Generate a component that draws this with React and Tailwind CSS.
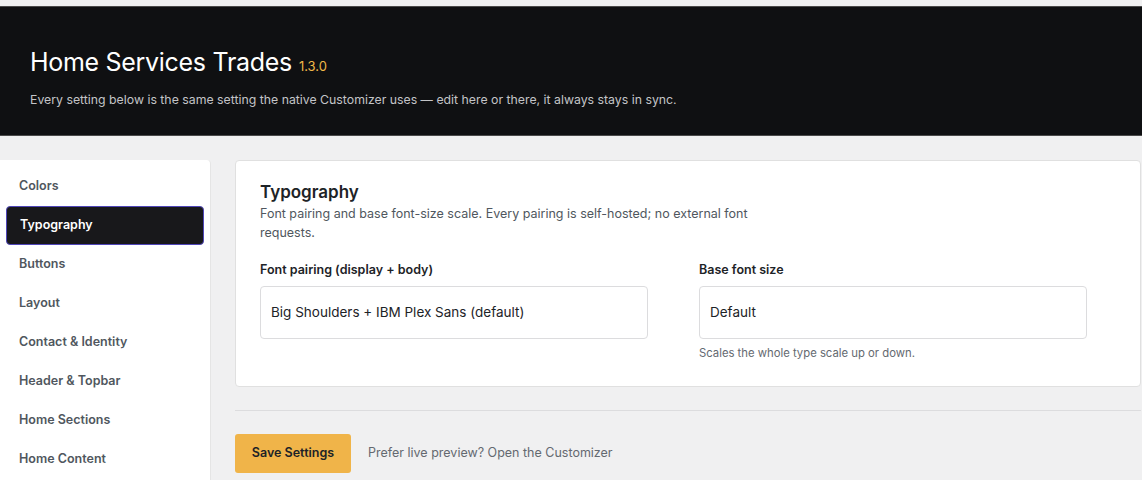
export default function App() {
  const items = [
    "Colors",
    "Typography",
    "Buttons",
    "Layout",
    "Contact & Identity",
    "Header & Topbar",
    "Home Sections",
    "Home Content",
  ];
  return (
    <div className="min-h-screen bg-[#f0f0f1] font-['Inter','Liberation_Sans',sans-serif] overflow-hidden">
      <div className="h-[6px]" />
      <header className="h-[130px] bg-[#0f1012] border-y border-[#4a4a4a] pl-[30px] pt-[39px]">
        <h1 className="flex items-baseline gap-[7px] text-[25px] leading-[32px] font-normal text-white tracking-[-0.3px]">
          Home Services Trades
          <span className="text-[13px] tracking-normal text-[#f0b849]">1.3.0</span>
        </h1>
        <p className="mt-[9px] text-[12.3px] leading-[18px] text-[#c3c4c7]">
          Every setting below is the same setting the native Customizer uses — edit here or there, it always stays in sync.
        </p>
      </header>
      <div className="flex mt-[24px] items-start">
        <nav className="w-[211px] shrink-0 bg-white rounded-tr-[4px] border-r border-[#e5e5e5] pt-[7px] px-[6px] h-[400px]">
          {items.map((it) => (
            <div
              key={it}
              className={
                it === "Typography"
                  ? "h-[39px] flex items-center pl-[13px] rounded-[4px] bg-[#18181b] border border-[#4f46b8] text-white text-[12.5px] font-semibold"
                  : "h-[39px] flex items-center pl-[13px] text-[12.5px] font-semibold text-[#50575e]"
              }
            >
              {it}
            </div>
          ))}
        </nav>
        <main className="flex-1 ml-[24px] mr-px">
          <section className="bg-white border border-[#e0e0e0] rounded-[4px] h-[227px] pl-[24px] pt-[19px]">
            <h2 className="text-[17px] leading-[24px] font-semibold text-[#1d2327]">Typography</h2>
            <p className="max-w-[510px] text-[12.5px] leading-[19px] text-[#50575e]">
              Font pairing and base font-size scale. Every pairing is self-hosted; no external font requests.
            </p>
            <div className="mt-[19px] grid grid-cols-[388px_388px] gap-x-[51px]">
              <div>
                <label className="block text-[12.5px] leading-[18px] font-semibold text-[#1d2327]">
                  Font pairing (display + body)
                </label>
                <div className="mt-[7px] h-[53px] border border-[#dcdcde] rounded-[4px] flex items-center pl-[10px] text-[13.5px] text-[#1d2327]">
                  Big Shoulders + IBM Plex Sans (default)
                </div>
              </div>
              <div>
                <label className="block text-[12.5px] leading-[18px] font-semibold text-[#1d2327]">
                  Base font size
                </label>
                <div className="mt-[7px] h-[53px] border border-[#dcdcde] rounded-[4px] flex items-center pl-[10px] text-[13.5px] text-[#1d2327]">
                  Default
                </div>
                <p className="mt-[7px] text-[11.3px] leading-[15px] text-[#646970]">
                  Scales the whole type scale up or down.
                </p>
              </div>
            </div>
          </section>
          <div className="mt-[23px] border-t border-[#dcdcde]" />
          <div className="mt-[23px] flex items-center gap-[17px]">
            <button className="h-[39px] w-[116px] rounded-[3px] bg-[#f0b449] text-[12.5px] font-semibold text-[#1d2327]">
              Save Settings
            </button>
            <span className="text-[12.5px] text-[#646970]">Prefer live preview? Open the Customizer</span>
          </div>
        </main>
      </div>
    </div>
  );
}
